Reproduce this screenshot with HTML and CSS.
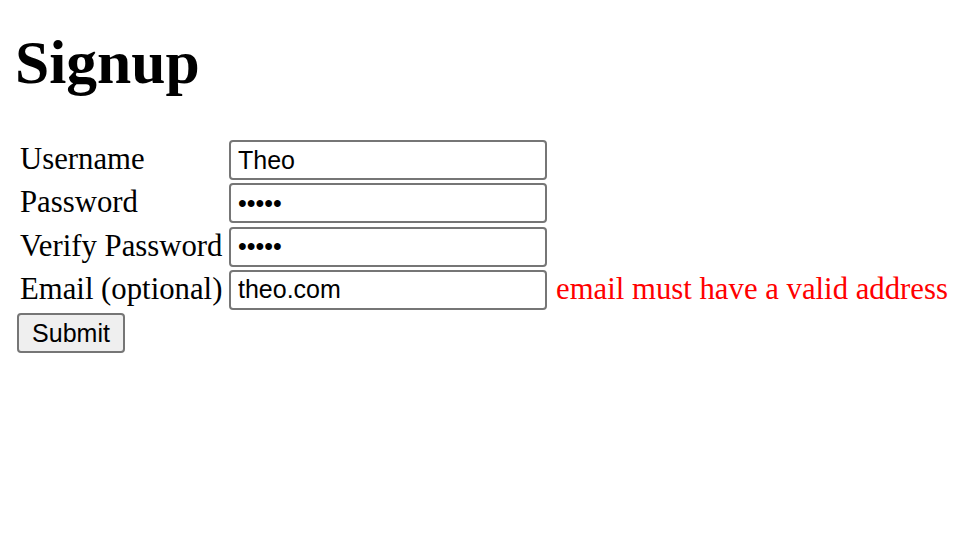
FILE: index.html
```html
<!DOCTYPE html>
<html>
<head>
<meta charset="utf-8">
<link rel="stylesheet" href="styles.css">
</head>
<body>
<h1 class="title">Signup</h1>
<form class="form">
  <div class="grid">
    <label class="label" for="u">Username</label>
    <input class="field" id="u" type="text" value="Theo">
    <span class="err"></span>
    <label class="label" for="p">Password</label>
    <input class="field" id="p" type="password" value="12345">
    <span class="err"></span>
    <label class="label" for="v">Verify Password</label>
    <input class="field" id="v" type="password" value="12345">
    <span class="err"></span>
    <label class="label" for="e">Email (optional)</label>
    <input class="field" id="e" type="text" value="theo.com">
    <span class="err">email must have a valid address</span>
  </div>
  <button class="submit" type="button">Submit</button>
</form>
</body>
</html>
```
FILE: styles.css
```css
html, body {
  background: #ffffff;
}
body {
  margin: 0;
  padding: 0 15px;
  font-family: "Liberation Serif", "Times New Roman", serif;
  font-size: 30.75px;
  color: #000000;
}
.title {
  font-size: 61.5px;
  font-weight: bold;
  line-height: 69px;
  margin: 28px 0 0 0;
}
.form {
  margin-top: 43px;
}
.grid {
  display: grid;
  grid-template-columns: 209px 318px auto;
  grid-auto-rows: 40px;
  row-gap: 3.3px;
  align-items: center;
  margin-left: 5px;
}
.label {
  white-space: nowrap;
  line-height: 34px;
  position: relative;
  top: -1px;
}
.field {
  box-sizing: border-box;
  width: 318px;
  height: 40px;
  margin: 0;
  padding: 0 7px;
  border: 2px solid #767676;
  border-radius: 4px;
  background: #ffffff;
  font-family: "Liberation Sans", Arial, sans-serif;
  font-size: 25px;
  color: #000000;
  outline: none;
}
.err {
  color: #ff0000;
  margin-left: 9px;
  white-space: nowrap;
  line-height: 34px;
  position: relative;
  top: -1px;
}
.submit {
  box-sizing: border-box;
  display: block;
  margin: 3.5px 0 0 2px;
  width: 108px;
  height: 40px;
  padding: 0 12px;
  border: 2px solid #767676;
  border-radius: 4px;
  background: #efefef;
  font-family: "Liberation Sans", Arial, sans-serif;
  font-size: 25px;
  color: #000000;
}
```
